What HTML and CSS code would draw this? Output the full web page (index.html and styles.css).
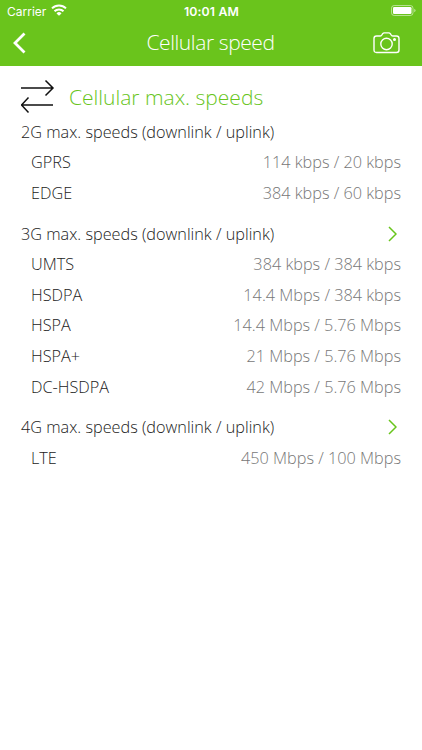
FILE: index.html
```html
<!DOCTYPE html>
<html lang="en">
<head>
  <meta charset="UTF-8">
  <meta name="viewport" content="width=device-width, initial-scale=1.0">
  <title>Cellular speed</title>
  <link rel="stylesheet" href="styles.css">
</head>
<body>

<header class="header">
  <div class="status-bar">
    <div class="carrier">
      <span>Carrier</span>
      <svg class="wifi" width="16" height="12" viewBox="0 0 16 12" fill="none" stroke="#fff" stroke-width="2">
        <path d="M1 4.400a10 10 0 0 1 14 0"/>
        <path d="M3.500 7.300a6.400 6.400 0 0 1 9 0"/>
        <path d="M8 11.800L5.500 9.400a3.500 3.500 0 0 1 5 0z" fill="#fff" stroke="none"/>
      </svg>
    </div>
    <span class="clock">10:01 AM</span>
    <div class="battery">
      <svg width="25" height="11" viewBox="0 0 25 11">
        <rect x="0.5" y="0.5" width="21.500" height="10" rx="2.700" fill="none" stroke="#fff" stroke-opacity="0.5"/>
        <rect x="2" y="2" width="18.500" height="7" rx="1.300" fill="#fff"/>
        <path d="M23.300 3.700q1.200 .5 1.200 1.800t-1.200 1.800z" fill="#fff" fill-opacity="0.6"/>
      </svg>
    </div>
  </div>
  <nav class="nav-bar">
    <svg class="back" width="14" height="22" viewBox="0 0 14 22" fill="none" stroke="#fff" stroke-width="2.800">
      <path d="M12.500 1.500L3 11L12.500 20.500"/>
    </svg>
    <h1 class="nav-title">Cellular speed</h1>
    <svg class="camera" width="28" height="22" viewBox="0 0 28 22" fill="none" stroke="#fff" stroke-width="1.400">
      <path d="M3.500 4H7q1 0 1.700-.9l1-1.400q.6-.8 1.500-.8h4.600q.9 0 1.500.8l1 1.400q.7.900 1.700.9h3.500q2.500 0 2.500 2.500v11.500q0 2.500-2.500 2.500h-20Q1 20.500 1 18V6.500Q1 4 3.500 4z"/>
      <circle cx="13.500" cy="12" r="5.700"/>
      <circle cx="21.500" cy="7.500" r="0.800" fill="#fff"/>
    </svg>
  </nav>
</header>

<main class="content">
  <div class="page-title">
    <svg width="34" height="34" viewBox="0 0 34 34" fill="none" stroke="#111" stroke-width="1.500">
      <path d="M0 9h32M24.500 1.500L32 9L24.500 16.500"/>
      <path d="M32 26H0M7.500 18.500L0.500 26L7.500 33.500"/>
    </svg>
    <h2>Cellular max. speeds</h2>
  </div>

  <section class="group">
    <h3 class="group-head"><span>2G max. speeds (downlink / uplink)</span></h3>
    <div class="row"><span>GPRS</span><span class="value">114 kbps / 20 kbps</span></div>
    <div class="row"><span>EDGE</span><span class="value">384 kbps / 60 kbps</span></div>
  </section>

  <section class="group">
    <h3 class="group-head">
      <span>3G max. speeds (downlink / uplink)</span>
      <svg width="9" height="16" viewBox="0 0 9 16"><path d="M1 1l7 7-7 7"/></svg>
    </h3>
    <div class="row"><span>UMTS</span><span class="value">384 kbps / 384 kbps</span></div>
    <div class="row"><span>HSDPA</span><span class="value">14.4 Mbps / 384 kbps</span></div>
    <div class="row"><span>HSPA</span><span class="value">14.4 Mbps / 5.76 Mbps</span></div>
    <div class="row"><span>HSPA+</span><span class="value">21 Mbps / 5.76 Mbps</span></div>
    <div class="row"><span>DC-HSDPA</span><span class="value">42 Mbps / 5.76 Mbps</span></div>
  </section>

  <section class="group">
    <h3 class="group-head">
      <span>4G max. speeds (downlink / uplink)</span>
      <svg width="9" height="16" viewBox="0 0 9 16"><path d="M1 1l7 7-7 7"/></svg>
    </h3>
    <div class="row"><span>LTE</span><span class="value">450 Mbps / 100 Mbps</span></div>
  </section>
</main>

</body>
</html>
```

FILE: styles.css
```css
body {
  margin: 0;
  background-color: #fff;
  color: #222;
  font-family: "Open Sans", sans-serif;
  font-weight: 300;
}

h1, h2, h3 {
  margin: 0;
  font-weight: 300;
}

/* Green top area */
.header {
  height: 66px;
  background-color: #6ac41c;
  color: #fff;
}

.status-bar {
  display: grid;
  grid-template-columns: 1fr auto 1fr;
  align-items: center;
  height: 22px;
  padding: 0 6px 0 7px;
  font-family: Inter, sans-serif;
  font-size: 12px;
  font-weight: 400;
}

.carrier {
  display: flex;
  align-items: center;
  gap: 5px;
}

.wifi {
  margin-top: -2px;
}

.clock {
  font-weight: 600;
  font-size: 12.3px;
  letter-spacing: 0.15px;
}

.battery {
  display: flex;
  justify-content: flex-end;
  margin-top: -1px;
}

.nav-bar {
  display: grid;
  grid-template-columns: 28px 1fr 28px;
  align-items: center;
  height: 42px;
  padding: 0 21px 0 12px;
}

.nav-title {
  padding-left: 8px;
  font-size: 21px;
  line-height: 36px;
  padding-bottom: 3px;
  letter-spacing: -0.4px;
  text-align: center;
}

/* Speed list */
.content {
  padding: 11px 21px 0 21px;
}

.page-title {
  display: flex;
  align-items: center;
  gap: 14px;
  height: 39.6px;
  color: #68c51c;
}

.page-title svg {
  margin-top: -2px;
}

.page-title h2 {
  font-size: 21px;
  font-weight: 350;
}

.group {
  margin-bottom: 10px;
}

.group-head,
.row {
  display: flex;
  align-items: center;
  justify-content: space-between;
  height: 30.6px;
  font-size: 16.25px;
}

.group-head svg {
  margin-right: 4px;
  fill: none;
  stroke: #68c51c;
  stroke-width: 1.5;
}

.row {
  padding-left: 10px;
}

.value {
  color: #777;
}
```
